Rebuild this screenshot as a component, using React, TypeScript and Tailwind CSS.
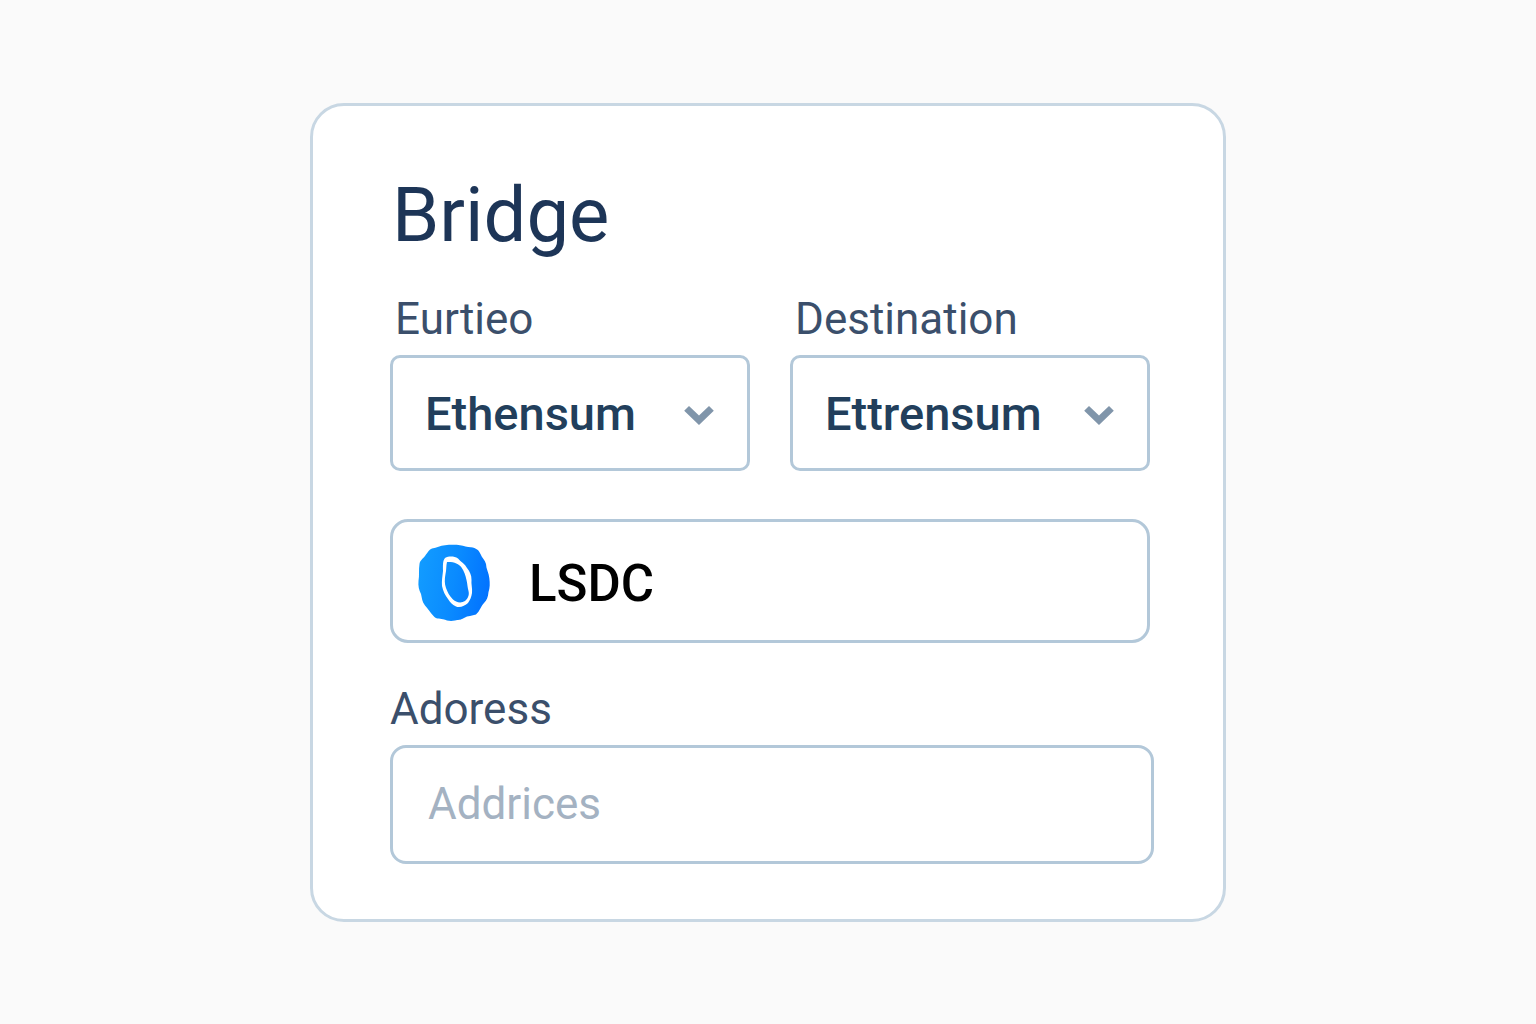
import React, { useState } from 'react';

interface NetworkSelectProps {
    id: string;
    label: string;
    value: string;
    options: string[];
    onChange: (value: string) => void;
}

const networks = ['Ethensum', 'Ettrensum'];

const NetworkSelect: React.FC<NetworkSelectProps> = ({ id, label, value, options, onChange }) => {
    return (
        <div className="min-w-0">
            <label htmlFor={id} className="mb-3 block pl-[5px] text-[44px] leading-[48px] text-[#3b4f6b]">{label}</label>
            <div className="relative">
                <select
                    id={id}
                    className="block h-[116px] w-full appearance-none rounded-[10px] border-3 border-[#b3c8d9] bg-white pt-1 pr-20 pl-8 text-[47px] font-medium text-[#223f5c]"
                    value={value}
                    onChange={(e) => onChange(e.target.value)}
                >
                    {options.map((option) => (
                        <option key={option} value={option}>{option}</option>
                    ))}
                </select>
                <svg
                    className="pointer-events-none absolute top-1/2 right-9 h-6 w-[30px] -translate-y-1/2"
                    viewBox="0 0 30 24"
                    aria-hidden="true"
                >
                    <path d="M5 5 15 14.500 25 5 29.800 9.800 15 24 0.200 9.800Z" fill="#8095aa" />
                </svg>
            </div>
        </div>
    );
};

const TokenIcon = () => (
    <svg className="h-[78px] w-[72px] shrink-0" viewBox="0 0 72 78" aria-hidden="true">
        <defs>
            <linearGradient id="token-fill" x1="0" y1="0.4" x2="1" y2="0.6">
                <stop offset="0" stopColor="#129bff" />
                <stop offset="0.5" stopColor="#0a8bff" />
                <stop offset="1" stopColor="#0272ff" />
            </linearGradient>
        </defs>
        <path
            d="M14 4.5C19 4 22 1.5 27 1.2C32 .6 38 .6 42 1.2C46 2 49 3 53 3.2C58 4 61 6 62.500 10C64 14 67 16 68 20C68 25 71 29 71.300 34C72 39 72 44 70.500 48C70 53 69 56 66 59C63 62 62 67 58 70.500C54 72 50 71.500 46 74C42 76.500 40 75.500 37 76.500C32 77.500 29 76.500 25 75.300C21 74.500 18 75 15.500 72C12 68 10 65 7 61.500C4 58 4 54 3 50C1 46 0 42 .5 37C1.500 31 .5 26 1.500 20C2 16 6 14 8 10.500C10 8 11 5.500 14 4.500Z"
            fill="url(#token-fill)"
        />
        <path
            fillRule="evenodd"
            fill="#fff"
            d="M27 14C31 12 36 12 40 14.500C43 18 47 20 49 24C52 28 53.500 31 53.500 36C53 40 54.500 44 54 49C53.500 53 52 56 50 59C47 62 42 64 38 62.500C34 61 32 58 30 55C27 51 25 47 24 42C23.500 37 24.500 32 25 27C25 22 24.500 17 27 14ZM29 18C28 22 28.500 26 27.500 30C26.500 35 26.500 40 28 44C29.500 48 31.500 52 34.500 55C38 58.500 43 59.500 47 57C50 54.500 51.500 51 50.500 47C49.500 44 49.500 40 48.500 36C47.500 31 46 27 43.500 23.500C41 19.500 35 17.500 29 18Z"
        />
    </svg>
);

const App = () => {
    const [source, setSource] = useState(networks[0]);
    const [destination, setDestination] = useState(networks[1]);
    const [address, setAddress] = useState('');

    return (
        <main className="flex min-h-screen items-center justify-center bg-[#fafafa] font-[Roboto,sans-serif]">
            <form className="w-full max-w-[916px] rounded-[34px] border-3 border-[#c8d7e3] bg-white pt-[69px] pr-[69px] pb-[55px] pl-[77px]">
                <h1 className="mb-10 pl-0.5 text-[76px] leading-[80px] text-[#1d3557]">Bridge</h1>

                <div className="pr-1">
                    <div className="mb-12 grid grid-cols-2 gap-10">
                        <NetworkSelect id="source" label="Eurtieo" value={source} options={networks} onChange={setSource} />
                        <NetworkSelect id="destination" label="Destination" value={destination} options={networks} onChange={setDestination} />
                    </div>

                    <button
                        type="button"
                        className="mb-[42px] flex h-[124px] w-full items-center gap-[39px] rounded-[18px] border-3 border-[#b3c8d9] bg-white pt-1 pl-[25px] text-left text-[51px] font-medium text-black"
                    >
                        <TokenIcon />
                        <span className="pt-1">LSDC</span>
                    </button>
                </div>

                <label htmlFor="address" className="mb-3 block text-[44px] leading-[48px] text-[#3b4f6b]">Adoress</label>
                <input
                    id="address"
                    type="text"
                    placeholder="Addrices"
                    className="block h-[119px] w-full rounded-[16px] border-3 border-[#b3c8d9] bg-white px-[35px] text-[44px] text-[#223f5c] placeholder:text-[#a4b2c2]"
                    value={address}
                    onChange={(e) => setAddress(e.target.value)}
                />
            </form>
        </main>
    );
};

export default App;
